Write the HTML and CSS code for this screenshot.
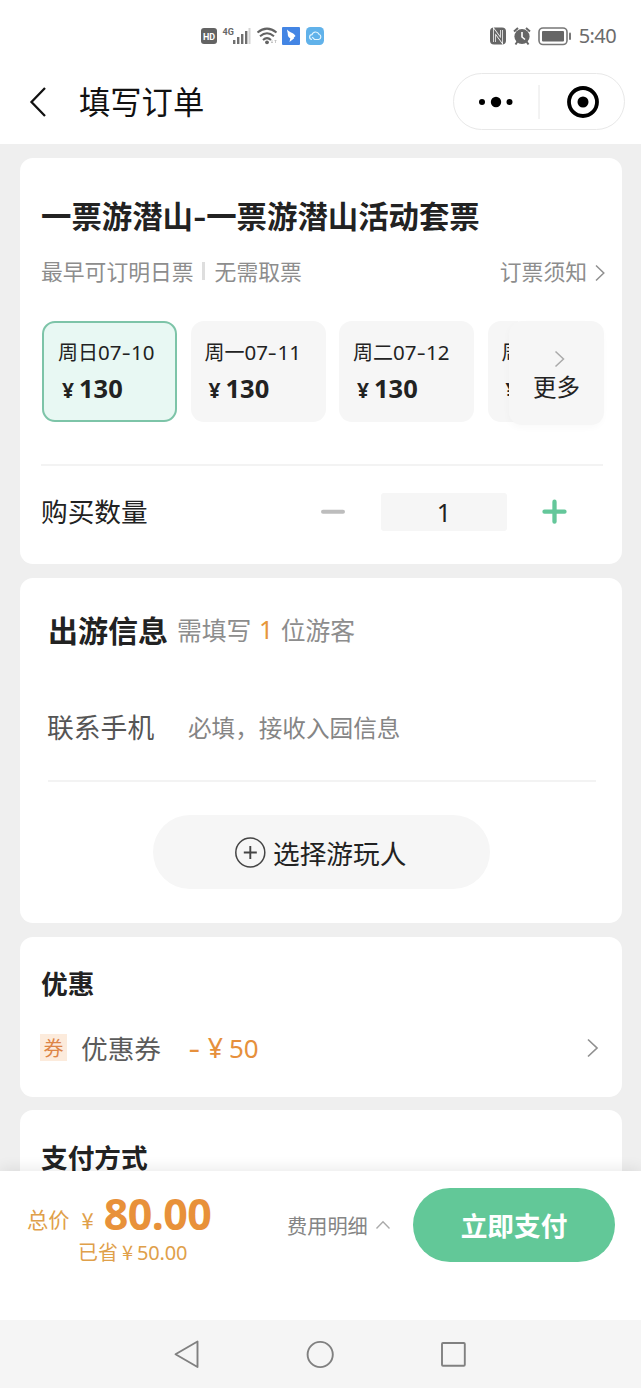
FILE: index.html
```html
<!DOCTYPE html>
<html lang="zh-CN">
<head>
<meta charset="utf-8">
<title>填写订单</title>
<link rel="stylesheet" href="styles.css">
</head>
<body>
<div class="screen">
  <header class="top">
    <div class="status">
      <svg class="status-left" width="126" height="24" viewBox="0 0 126 24">
        <rect x="1" y="5" width="16" height="16" rx="3" fill="#636363"/>
        <text x="9" y="16.8" class="hd">HD</text>
        <text x="22.500" y="11.500" class="g4">4G</text>
        <g fill="#707070"><rect x="33" y="17" width="2.400" height="4"/><rect x="37" y="14" width="2.400" height="7"/><rect x="41" y="11" width="2.400" height="10"/><rect x="45" y="8" width="2.400" height="13"/></g>
        <rect x="48.500" y="5" width="2" height="16" fill="#d4d4d4"/>
        <g fill="none" stroke="#636363" stroke-width="2"><path d="M57.500 9.500Q67 1.800 76.500 9.500"/><path d="M60 13.300Q67 7.300 74 13.300"/><path d="M63 17Q67 13.300 71 17"/></g>
        <circle cx="67" cy="19.300" r="1.900" fill="#636363"/>
        <path d="M72 20v-3m-1 2 1 1 1-1M75.500 17v3m-1-2 1-1 1 1" fill="none" stroke="#bbb" stroke-width=".8"/>
        <rect x="82" y="4" width="18" height="18" rx="1" fill="#4385e4"/>
        <path d="M87 6.500c1.500 2.500 6.500 3 8.500 6.500l-1.800 1.800.5.500-4.700 3.700.8-3.800c-2-.8-2.500-2.200-2.500-3.700.2-1.800-.8-3-.8-5z" fill="#fff"/>
        <rect x="106" y="4" width="18" height="18" rx="4.500" fill="#61b2ea"/>
        <path d="M112 16.500a2.400 2.400 0 0 1 0-4.800 3.700 3.700 0 0 1 7-.4 2.700 2.700 0 0 1-.3 5.200h-4.200l-2.300-2.300" fill="none" stroke="#e4f6ff" stroke-width="1.200"/>
      </svg>
      <div class="status-right">
        <svg width="84" height="24" viewBox="0 0 84 24">
          <rect x="1" y="4.500" width="16" height="17" rx="4" fill="#666"/>
          <path d="M5.500 19V8l7 9.500V7" fill="none" stroke="#fff" stroke-width="3"/>
          <path d="M5.500 20V8l7 9.500V6" fill="none" stroke="#666" stroke-width="1.500"/>
          <circle cx="33" cy="13.500" r="7.600" fill="#666"/>
          <path d="M28.500 18.500 26.500 21.500M37.500 18.500l2 3M25 8.500l4-3.500M41 8.500l-4-3.500" stroke="#666" stroke-width="2"/>
          <path d="M33 9v5l3 2.500" fill="none" stroke="#fff" stroke-width="1.600"/>
          <rect x="50" y="5" width="28" height="16.500" rx="4" fill="none" stroke="#777" stroke-width="1.600"/>
          <rect x="53" y="8" width="22" height="10.500" rx="1" fill="#666"/>
          <rect x="80" y="9.500" width="2" height="7.500" rx="1" fill="#777"/>
        </svg>
        <span class="clock">5:40</span>
      </div>
    </div>
    <div class="titlebar">
      <svg class="back" width="20" height="34" viewBox="0 0 20 34"><path d="M17 3 3.500 17 17 31" fill="none" stroke="#111" stroke-width="2.300"/></svg>
      <h1 class="page-title">填写订单</h1>
      <div class="capsule">
        <svg width="170" height="55" viewBox="0 0 170 55">
          <circle cx="28" cy="28" r="3"/><circle cx="42" cy="28" r="5.200"/><circle cx="55.500" cy="28" r="3"/>
          <path d="M85 11v34" stroke="#e6e6e6"/>
          <circle cx="129" cy="28" r="14" fill="none" stroke="#000" stroke-width="3.800"/><circle cx="129" cy="28" r="5.500"/>
        </svg>
      </div>
    </div>
  </header>

  <main class="content">
    <section class="card ticket">
      <h2 class="ticket-name">一票游潜山<i>-</i>一票游潜山活动套票</h2>
      <div class="notes">
        <span>最早可订明日票</span><i class="bar"></i><span>无需取票</span>
        <span class="rules">订票须知</span>
        <svg class="rules-arrow" width="12" height="18" viewBox="0 0 12 18"><path d="M2 1.500 9.800 9 2 16.500" fill="none" stroke="#909090" stroke-width="1.500"/></svg>
      </div>
      <div class="dates">
        <div class="date active"><div class="day">周日<b>07<i>-</i>10</b></div><div class="price"><i>¥</i>130</div></div>
        <div class="date"><div class="day">周一<b>07<i>-</i>11</b></div><div class="price"><i>¥</i>130</div></div>
        <div class="date"><div class="day">周二<b>07<i>-</i>12</b></div><div class="price"><i>¥</i>130</div></div>
        <div class="date"><div class="day">周</div><div class="price"><i>¥</i></div></div>
        <div class="more">
          <svg width="12" height="18" viewBox="0 0 12 18"><path d="M1.500 1.500 9.500 9l-8 7.500" fill="none" stroke="#aaa" stroke-width="1.500"/></svg>
          <span>更多</span>
        </div>
      </div>
      <div class="quantity">
        <span class="quantity-label">购买数量</span>
        <svg width="26" height="26" viewBox="0 0 26 26"><path d="M3 12.700h20" stroke="#bdbdbd" stroke-width="4" stroke-linecap="round"/></svg>
        <span class="quantity-value">1</span>
        <svg width="26" height="26" viewBox="0 0 26 26"><path d="M3.500 12.700h20M13.500 2.700v20" stroke="#64c79a" stroke-width="4.300" stroke-linecap="round"/></svg>
      </div>
    </section>

    <section class="card trip">
      <div class="trip-head"><h2>出游信息</h2><span class="need">需填写</span><span class="count">1</span><span class="need">位游客</span></div>
      <div class="phone"><span class="phone-label">联系手机</span><span class="phone-hint">必填，接收入园信息</span></div>
      <div class="choose">
        <svg width="32" height="32" viewBox="0 0 32 32"><circle cx="16.300" cy="16.500" r="14.500" fill="none" stroke="#444" stroke-width="1.500"/><path d="M9.800 16.500h13M16.300 10v13" stroke="#444" stroke-width="1.900"/></svg>
        <span>选择游玩人</span>
      </div>
    </section>

    <section class="card discount">
      <h3>优惠</h3>
      <div class="coupon">
        <span class="badge">券</span><span class="coupon-name">优惠券</span>
        <span class="minus">-</span><span class="yen">¥</span><span class="amount">50</span>
        <svg class="coupon-arrow" width="14" height="20" viewBox="0 0 14 20"><path d="M2 1.500 11 10l-9 8.500" fill="none" stroke="#909090" stroke-width="1.700"/></svg>
      </div>
    </section>

    <section class="card payment"><h3>支付方式</h3></section>
  </main>

  <footer class="checkout">
    <div class="sum">
      <div class="total"><span class="total-label">总价</span><span class="total-yen">¥</span><strong>80.00</strong></div>
      <div class="saved">已省<i>¥</i><b>50.00</b></div>
    </div>
    <span class="detail">费用明细</span>
    <svg class="caret" width="16" height="10" viewBox="0 0 16 10"><path d="M1.500 8.500 8 1.800l6.500 6.700" fill="none" stroke="#aaa" stroke-width="1.400"/></svg>
    <div class="pay">立即支付</div>
  </footer>

  <nav class="system">
    <svg width="641" height="68" viewBox="0 0 641 68"><g fill="none" stroke="#808080" stroke-width="1.900" stroke-linejoin="round"><path d="M175.500 34.300 197.500 21.500v25.500z"/><circle cx="320.200" cy="34.500" r="12.600"/><rect x="442" y="23" width="22.800" height="22.800" rx="1"/></g></svg>
  </nav>
</div>
</body>
</html>
```
FILE: styles.css
```css
* { box-sizing: border-box; }
body, h1, h2, h3 { margin: 0; }
body { font-family: "Noto Sans CJK SC", sans-serif; color: #222; background: #fff; }
i, b { font-style: normal; font-weight: inherit; }
svg { display: block; flex: none; }
span, h1, h2, h3, .price, .day { white-space: nowrap; }
.day b, .price, .quantity-value, .count, .minus, .amount, .yen, .saved b, .total strong { font-family: "Noto Sans", "Noto Sans CJK SC", sans-serif; }

.screen { width: 641px; height: 1388px; display: flex; flex-direction: column; overflow: hidden; }

.top { height: 144px; flex: none; background: #fff; }
.status { height: 60px; display: flex; align-items: flex-start; padding: 23px 25px 0 200px; justify-content: space-between; }
.status-right { display: flex; align-items: flex-start; }
.hd { font: bold 9px Roboto, sans-serif; fill: #fff; text-anchor: middle; }
.g4 { font: bold 9px Roboto, sans-serif; fill: #666; }
.clock { font: 20px/26px "Noto Sans", sans-serif; color: #6b6b6b; margin-left: 6px; letter-spacing: -.6px; }
.titlebar { height: 84px; display: flex; align-items: center; padding: 0 16px 0 28px; }
.page-title { font-size: 31.300px; font-weight: 400; line-height: 46px; margin-left: 31px; color: #111; margin-top: -2px; }
.capsule { width: 172px; height: 57px; margin: -2px 0 0 auto; border: 1px solid #e8e8e8; border-radius: 29px; }

.content { flex: 1; min-height: 0; overflow: hidden; background: #efefef; padding: 14px 19px 0 20px; }
.card { background: #fff; border-radius: 13px; }

.ticket { height: 406px; padding: 34px 16px 0 21px; margin-bottom: 14px; }
.ticket-name { font-size: 30.400px; font-weight: 700; line-height: 46px; }
.ticket-name i { display: inline-block; transform: scaleX(1.2); margin: 0 1px; }
.notes { display: flex; align-items: center; height: 32px; margin-top: 17px; font-size: 21.800px; line-height: 32px; color: #8d8d8d; }
.bar { width: 3px; height: 18px; background: #dedede; margin: 0 10px 0 8px; }
.rules { margin-left: auto; }
.rules-arrow { margin: 3px 0 0 7px; }
.dates { position: relative; display: flex; gap: 13.500px; margin: 34px 0 0 1px; height: 101px; width: 562px; }
.date { flex: none; width: 135px; border-radius: 13px; background: #f6f6f6; padding: 16px 0 0 14px; }
.date.active { background: #e8f8f3; border: 2px solid #7dc4a8; padding: 14px 0 0 14px; }
.day { font-size: 20px; line-height: 30px; }
.day b { font-size: 20.500px; line-height: 1; }
.day i { display: inline-block; transform: scaleX(1.35); margin: 0 1.500px; }
.price { font-size: 25.500px; font-weight: 700; line-height: 36px; margin: 3px 0 0 4px; }
.price i { font-size: 21px; margin-right: 5px; }
.date:nth-child(4) { width: 30px; overflow: hidden; border-radius: 13px 0 0 13px; }
.more { position: absolute; left: 467px; top: 0; width: 95px; height: 104px; border-radius: 13px; background: #f6f6f6; box-shadow: -1px 3px 7px rgba(0,0,0,.025); display: flex; flex-direction: column; align-items: center; padding-top: 29px; font-size: 23.500px; line-height: 34px; }
.more svg { margin-left: 6px; }
.more span { margin-top: 1px; }
.quantity { display: flex; align-items: center; height: 94px; margin-top: 42px; border-top: 2px solid #f3f3f3; margin-right: 3px; }
.quantity-label { font-size: 26.700px; line-height: 40px; width: 279px; margin-top: -3px; }
.quantity-value { width: 126px; height: 38px; margin: 0 34px 0 35px; border-radius: 3px; background: #f6f6f6; text-align: center; font-size: 25px; line-height: 38px; }

.trip { height: 345px; padding: 28px 26px 0 28px; margin-bottom: 14px; }
.trip-head { display: flex; align-items: center; height: 46px; }
.trip-head h2 { font-size: 30px; line-height: 46px; margin: -1px 9px 0 0; }
.need { font-size: 24.800px; color: #8d8d8d; }
.count { font-size: 25px; color: #e6963c; margin: 0 7.500px; }
.phone { display: flex; align-items: center; height: 130px; border-bottom: 2px solid #f3f3f3; padding-top: 21px; }
.phone-label { font-size: 26.800px; color: #555; width: 141px; margin-left: -1px; }
.phone-hint { font-size: 23.600px; color: #858585; margin-top: 1px; }
.choose { width: 337px; height: 74px; margin: 33px 0 0 105px; border-radius: 37px; background: #f6f6f6; display: flex; align-items: center; padding-left: 81px; font-size: 26.700px; }
.choose span { margin-left: 7px; }

.discount { height: 160px; padding: 26px 22px 0 20px; margin-bottom: 13px; }
h3 { font-size: 26.700px; line-height: 40px; font-weight: 700; }
.discount h3 { padding-left: 1px; }
.coupon { display: flex; align-items: center; height: 40px; margin-top: 25px; font-size: 26.700px; line-height: 40px; }
.badge { width: 27px; height: 27px; background: #fcebdc; color: #dd8546; font-size: 20px; line-height: 27px; text-align: center; margin-top: -1px; }
.coupon-name { color: #5b5b5b; margin-left: 14px; }
.minus, .yen, .amount { color: #e6903c; }
.minus { margin-left: 29px; transform: scaleX(1.35); }
.yen { margin-left: 9px; }
.amount { margin-left: 6px; font-size: 26px; }
.coupon-arrow { margin-left: auto; }
.payment { height: 120px; padding: 27px 0 0 21px; }

.checkout { position: relative; height: 149px; flex: none; background: #fff; box-shadow: 0 -2px 14px rgba(0,0,0,.09); display: flex; align-items: flex-start; padding: 17px 26px 0 28px; }
.sum { width: 259px; color: #dfa04a; }
.total { display: flex; align-items: center; height: 50px; line-height: 50px; }
.total-label { font-size: 21.300px; margin: 12px 0 0 -1px; }
.total-yen { font-size: 22px; margin: 11px 0 0 12px; }
.total strong { font-size: 43px; color: #e8913a; margin: 1px 0 0 10px; letter-spacing: -.6px; }
.saved { font-size: 20px; line-height: 30px; margin: -1px 0 0 50px; }
.saved i { margin: 0 4px; }
.saved b { line-height: 1; }
.saved b { letter-spacing: -.2px; }
.detail { font-size: 20.200px; line-height: 30px; color: #858585; margin-top: 23px; }
.caret { margin: 32px 0 0 7px; }
.pay { width: 202px; height: 74px; margin-left: auto; border-radius: 37px; background: #62c898; color: #fff; font-size: 26.700px; font-weight: 700; line-height: 73px; text-align: center; }

.system { position: relative; height: 68px; flex: none; background: #f5f5f5; }
```
